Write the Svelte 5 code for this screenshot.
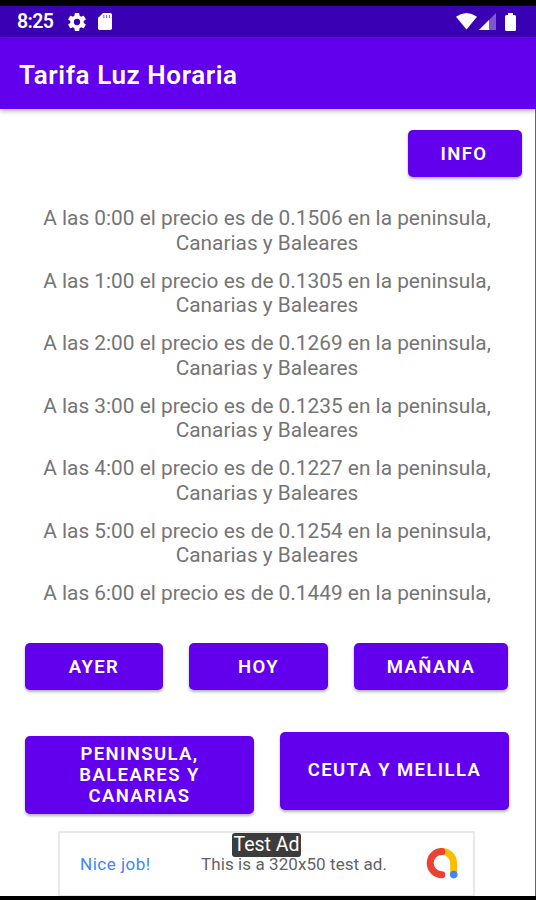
<script>
  const prices = ['0.1506', '0.1305', '0.1269', '0.1235', '0.1227', '0.1254', '0.1449'];
</script>

<div class="screen">
  <header class="status">
    <span class="clock">8:25</span>
    <svg class="gear" width="18" height="18" viewBox="2 2 20 20"><path fill="#fff" fill-rule="evenodd" d="M19.43 12.98c.04-.32.07-.64.07-.98s-.03-.66-.07-.98l2.11-1.65c.19-.15.24-.42.12-.64l-2-3.46c-.12-.22-.39-.3-.61-.22l-2.49 1c-.52-.4-1.08-.73-1.69-.98l-.38-2.65C14.46 2.18 14.25 2 14 2h-4c-.25 0-.46.18-.49.42l-.38 2.65c-.61.25-1.17.59-1.69.98l-2.49-1c-.23-.09-.49 0-.61.22l-2 3.46c-.13.22-.07.49.12.64l2.11 1.65c-.04.32-.07.65-.07.98s.03.66.07.98l-2.11 1.65c-.19.15-.24.42-.12.64l2 3.46c.12.22.39.3.61.22l2.49-1c.52.4 1.08.73 1.69.98l.38 2.65c.03.24.24.42.49.42h4c.25 0 .46-.18.49-.42l.38-2.65c.61-.25 1.17-.59 1.69-.98l2.49 1c.23.09.49 0 .61-.22l2-3.46c.12-.22.07-.49-.12-.64l-2.11-1.65zM12 15.500a3.500 3.500 0 1 1 0-7 3.500 3.500 0 0 1 0 7z"/></svg>
    <svg class="card" width="14" height="17" viewBox="0 0 14 17"><path fill="#fff" d="M5 0h7.200Q14 0 14 1.800v13.400q0 1.800-1.800 1.800H1.800Q0 17 0 15.200V5z"/><path stroke="#8e73d5" stroke-width="1.200" d="M5.800 2v3M8.600 2v3M11.400 2v3"/></svg>
    <span class="spacer"></span>
    <svg class="wifi" width="21" height="17" viewBox="0 0 21 17"><path fill="#fff" d="M0 3.800Q10.500-3.600 21 3.800L10.500 16.500z"/></svg>
    <svg class="signal" width="17" height="17" viewBox="0 0 17 17"><path fill="#fff" opacity=".35" d="M0 17 17 0v17z"/><path fill="#fff" d="M0 17 10 7v10z"/></svg>
    <svg class="battery" width="11" height="18" viewBox="0 0 11 18"><path fill="#fff" d="M3 0h5v2h1.500Q11 2 11 3.500v13Q11 18 9.500 18h-8Q0 18 0 16.500v-13Q0 2 1.500 2H3z"/></svg>
  </header>
  <div class="appbar"><h1>Tarifa Luz Horaria</h1></div>
  <main>
    <div class="top"><button class="info">INFO</button></div>
    <div class="list">
      {#each prices as price, hour}
        <p>A las {hour}:00 el precio es de {price} en la peninsula,<br />Canarias y Baleares</p>
      {/each}
    </div>
    <div class="days">
      <button class="ayer">AYER</button>
      <button class="hoy">HOY</button>
      <button class="manana">MAÑANA</button>
    </div>
    <div class="zones">
      <button class="pen">PENINSULA,<br />BALEARES Y<br />CANARIAS</button>
      <button class="ceuta">CEUTA Y MELILLA</button>
    </div>
    <div class="ad">
      <span class="nice">Nice job!</span>
      <span class="desc">This is a 320x50 test ad.</span>
      <svg class="logo" width="32" height="32" viewBox="0 0 32 32" fill="none" stroke-width="7" stroke-linecap="round">
        <path stroke="#fbbc04" d="M16 4.500A11.700 11.700 0 0 1 27.700 16.200V27"/>
        <path stroke="#ea4335" d="M15.800 4.500a11.600 11.600 0 1 0 0 23.200"/>
        <circle cx="27.700" cy="27.600" r="3.800" fill="#4285f4"/>
      </svg>
      <span class="badge">Test Ad</span>
    </div>
  </main>
</div>

<style>
  .screen {
    box-sizing: border-box;
    width: 536px;
    height: 900px;
    border-top: 6px solid #000;
    border-bottom: 4px solid #000;
    background: #fff;
    font-family: Roboto, sans-serif;
    display: flex;
    flex-direction: column;
    overflow: hidden;
    white-space: nowrap;
  }
  .status {
    height: 31px;
    flex: none;
    background: #3a00b3;
    display: flex;
    align-items: center;
    padding: 0 20px 0 17px;
    color: #fff;
  }
  .clock { font-size: 19.500px; line-height: 22px; padding-top: 1px; font-weight: 600; width: 51px; letter-spacing: -0.600px; }
  .card { margin-left: 12px; }
  .spacer { flex: 1; }
  .signal { margin-left: 2px; }
  .battery { margin-left: 9px; }
  .appbar {
    height: 72px;
    flex: none;
    background: #6200ee;
    box-shadow: 0 2px 5px rgba(0, 0, 0, 0.3);
    display: flex;
    align-items: center;
    padding-left: 19px;
    z-index: 1;
  }
  h1 { margin: 0; padding-top: 4px; color: #fff; font-size: 26px; font-weight: 600; line-height: 30px; letter-spacing: 0.600px; }
  main {
    flex: 1;
    min-height: 0;
    border-right: 1px solid #666;
    display: flex;
    flex-direction: column;
  }
  button {
    border: 0;
    padding: 0;
    margin: 0;
    border-radius: 5px;
    background: #6200ee;
    color: #fff;
    font: 600 18.500px/21.300px Roboto, sans-serif;
    letter-spacing: 1.400px;
    height: 47px;
    box-shadow: 0 2px 3px rgba(0, 0, 0, 0.3);
  }
  .top { display: flex; justify-content: flex-end; padding: 21px 13px 0 0; }
  .info { width: 114px; padding: 2px 2px 0 0; }
  .list {
    margin-top: 29px;
    height: 403px;
    flex: none;
    overflow: hidden;
    display: flex;
    flex-direction: column;
    gap: 13.500px;
  }
  p {
    margin: 0 1px 0 0;
    flex: none;
    text-align: center;
    font-size: 20.850px;
    line-height: 24.500px;
    color: #757575;
  }
  .days { display: flex; gap: 26px; padding: 34px 0 0 25px; }
  .days button { padding-top: 2px; }
  .ayer { width: 138px; }
  .hoy { width: 139px; }
  .manana { width: 154px; }
  .zones { display: flex; gap: 26px; padding: 42px 0 0 25px; }
  .zones button { width: 229px; height: 78px; }
  .zones .pen { margin-top: 4px; padding-top: 1px; }
  .ad {
    box-sizing: border-box;
    width: 417px;
    height: 65px;
    margin: 17px 0 0 58px;
    border: 2px solid #e8eaea;
    border-bottom-width: 1px;
    display: flex;
    align-items: center;
    position: relative;
    flex: none;
  }
  .nice { width: 121px; padding-left: 20px; color: #4285f4; font-size: 17px; letter-spacing: 0.500px; }
  .desc { color: #5f6368; font-size: 17px; letter-spacing: 0.080px; width: 225px; }
  .logo { margin-top: -2px; }
  .badge {
    position: absolute;
    left: 172px;
    top: 0;
    width: 69px;
    height: 24px;
    border-radius: 3px;
    background: #3c3c3c;
    color: #fff;
    font-size: 19.500px;
    line-height: 24px;
    text-align: center;
  }
</style>
